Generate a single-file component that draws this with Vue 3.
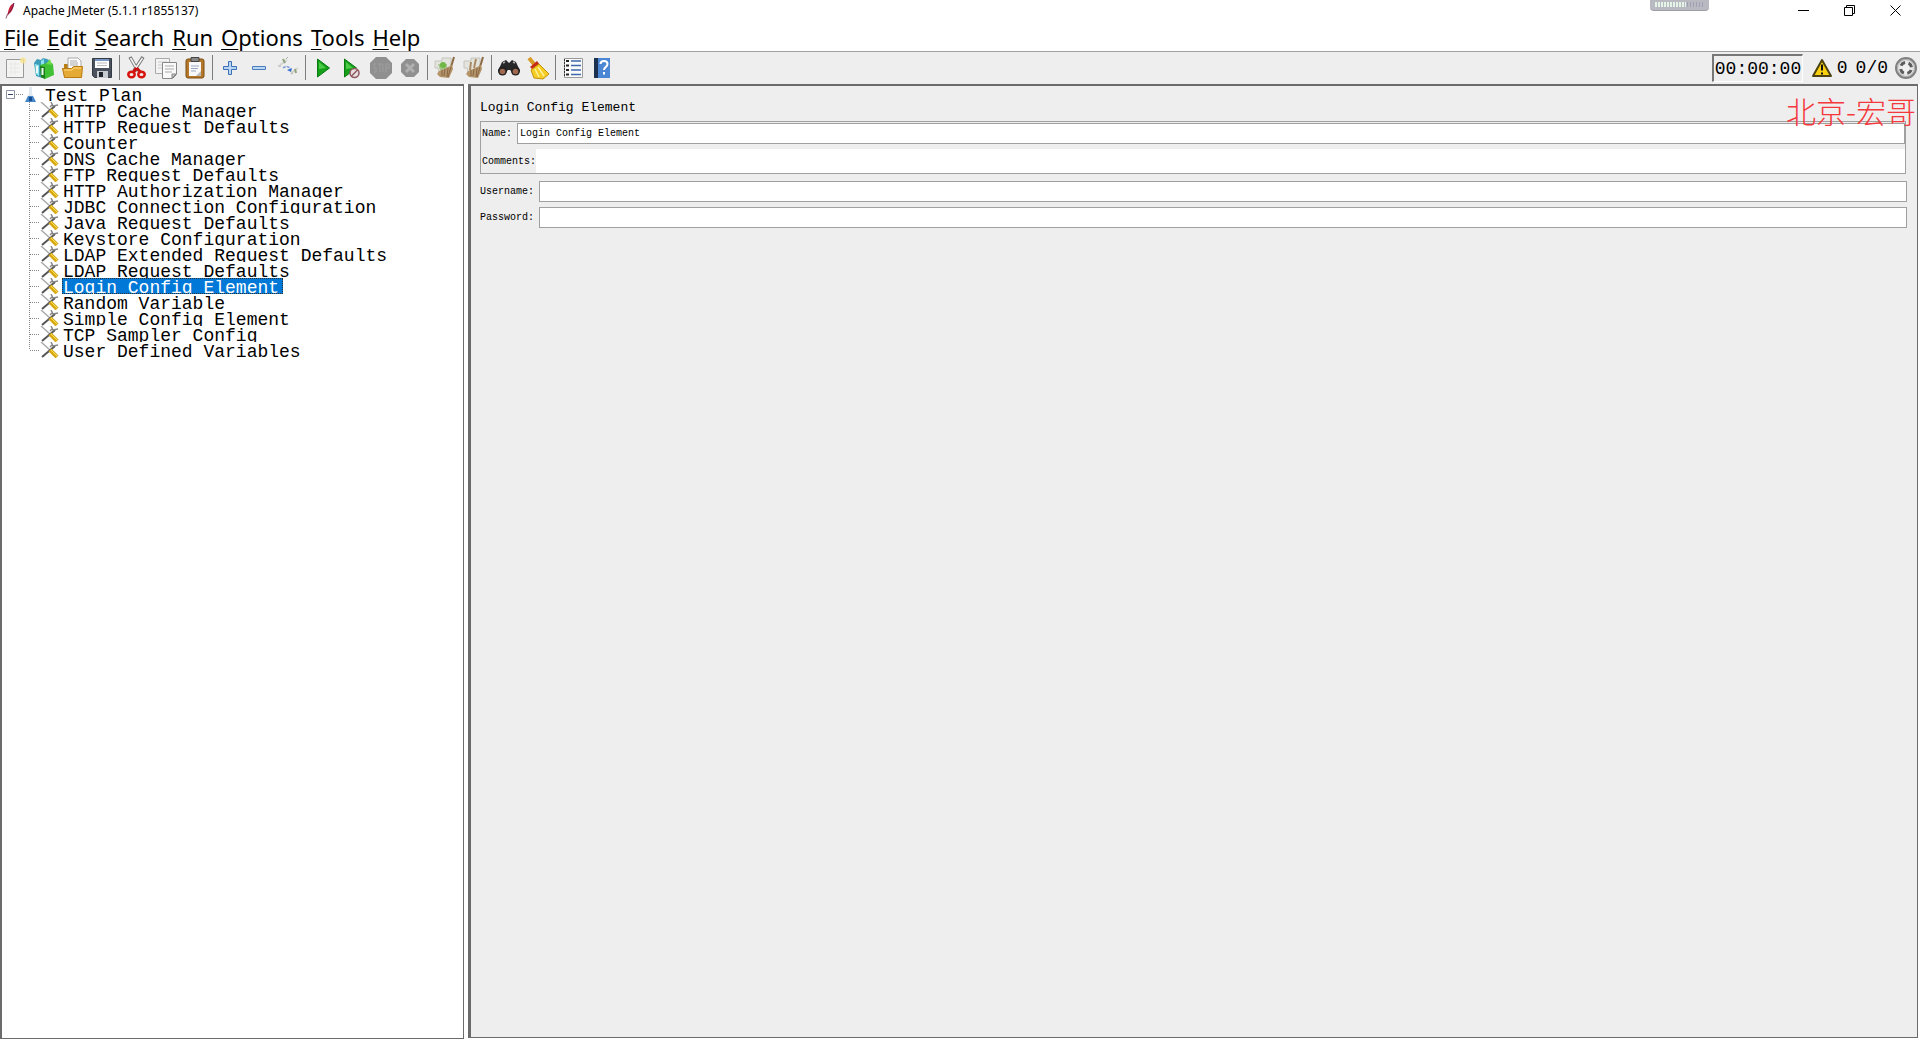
<script setup>
import { ref } from 'vue'

const menus = ['File', 'Edit', 'Search', 'Run', 'Options', 'Tools', 'Help']

const toolGroups = [
  ['New', 'Templates', 'Open', 'Save'],
  ['Cut', 'Copy', 'Paste'],
  ['Expand', 'Collapse', 'Toggle'],
  ['Start', 'Start no pauses', 'Stop', 'Shutdown'],
  ['Clear', 'Clear all'],
  ['Find', 'Reset search'],
  ['Function helper', 'Help contents'],
]

const elements = [
  'HTTP Cache Manager',
  'HTTP Request Defaults',
  'Counter',
  'DNS Cache Manager',
  'FTP Request Defaults',
  'HTTP Authorization Manager',
  'JDBC Connection Configuration',
  'Java Request Defaults',
  'Keystore Configuration',
  'LDAP Extended Request Defaults',
  'LDAP Request Defaults',
  'Login Config Element',
  'Random Variable',
  'Simple Config Element',
  'TCP Sampler Config',
  'User Defined Variables',
]

const selected = ref('Login Config Element')
const name = ref('Login Config Element')
const comments = ref('')
const username = ref('')
const password = ref('')
</script>

<template>
  <div class="window">
    <header class="titlebar">
      <svg class="feather" width="10" height="16" viewBox="0 0 10 16" aria-hidden="true">
        <path d="M9 0C6 1 4 4 3 9l-1 4 2-2c3-2 5-7 5-11z" fill="#c8203a" />
        <path d="M9 0C8 5 5 9 3 11" stroke="#6b2350" fill="none" />
        <path d="M2.500 11L1 15.500" stroke="#8d5a78" fill="none" />
      </svg>
      <span class="title">Apache JMeter (5.1.1 r1855137)</span>
      <div class="grip">
        <svg width="50" height="5" viewBox="0 0 50 5" aria-hidden="true">
          <path d="M0 2.500H31" stroke="#e4f4e6" stroke-width="5" stroke-dasharray="2 1" />
          <path d="M32 2.500H50" stroke="#a0a0b4" stroke-width="5" stroke-dasharray="1 2" />
        </svg>
      </div>
      <div class="controls">
        <button type="button" aria-label="Minimize">
          <svg width="11" height="11" viewBox="0 0 11 11"><path d="M0 5.500h11" stroke="#000" /></svg>
        </button>
        <button type="button" aria-label="Restore">
          <svg width="11" height="11" viewBox="0 0 11 11" fill="none" stroke="#000">
            <path d="M.5 2.500h8v8h-8zM2.500 2.500v-2h8v8h-2" />
          </svg>
        </button>
        <button type="button" aria-label="Close">
          <svg width="11" height="11" viewBox="0 0 11 11" fill="none" stroke="#000">
            <path d="M.5.5l10 10M10.500.5l-10 10" />
          </svg>
        </button>
      </div>
    </header>

    <nav class="menubar">
      <button v-for="m in menus" :key="m" type="button"><u>{{ m[0] }}</u>{{ m.slice(1) }}</button>
    </nav>

    <div class="toolbar">
      <div v-for="(group, g) in toolGroups" :key="g" class="group">
        <button v-for="t in group" :key="t" type="button" :aria-label="t">
          <svg width="24" height="24" viewBox="0 0 24 24" fill="none" aria-hidden="true">
            <g v-if="t === 'New'">
              <path d="M3.500 3.500h17v18h-17z" fill="#f4f4f2" stroke="#999" />
              <path d="M6 8h11M6 12h11M6 16h11M8 6v13M12 6v13" stroke="#e8e8e8" />
              <circle cx="20" cy="4.500" r="3" fill="#f7e58c" opacity=".8" />
            </g>
            <g v-else-if="t === 'Templates'">
              <path d="M2 7l3-4 4 1 2-2 4 1 2 1 1 14-8 4-6-2z" fill="#3d9db8" />
              <path d="M3 8l4 1v11l-3-2zM9 5l3-2v6l-3 1z" fill="#8ee4ee" />
              <path d="M8 9l10-3 3 2 1 11-9 4-4-2z" fill="#3fc035" />
              <path d="M8 10l5 1v12l-4-2z" fill="#1d7d1a" />
              <path d="M14 8l4-5 2 6z" fill="#6cdc4a" />
              <path d="M5 10v7M10.500 12v7" stroke="#eefaf4" stroke-width="2" />
            </g>
            <g v-else-if="t === 'Open'">
              <path d="M3 8h7l2 3h9v10H3z" fill="#b97f15" />
              <path d="M7 2h10l3 3v10H7z" fill="#fbfbfb" stroke="#aaa" />
              <path d="M9 5h7M9 7h8M9 9h8" stroke="#aaa" />
              <path d="M1.500 12.500h9l2-2h9l-1 11h-17z" fill="#e5aa35" stroke="#b97b12" />
              <path d="M3 14h8l2-2h7" stroke="#ffdd80" />
            </g>
            <g v-else-if="t === 'Save'">
              <path d="M2.500 2.500h19v19h-17l-2-2z" fill="#4b525e" stroke="#343a44" />
              <path d="M5 3h14v9H5z" fill="#fff" />
              <path d="M5 3h14v2H5z" fill="#7895c4" />
              <path d="M7 7h10M7 9.500h10" stroke="#bbb" />
              <path d="M7 15h11v7H7z" fill="#c8cbd0" />
              <path d="M9 16h4v5H9z" fill="#20242c" />
            </g>
            <g v-else-if="t === 'Cut'">
              <path d="M5 1l8 14M18 1l-9 14" stroke="#777" stroke-width="3.500" />
              <path d="M5.500 2l7 12M17.500 2l-8 12" stroke="#f4f4f4" stroke-width="1.500" />
              <path d="M11.500 12l-3 4M11.500 12l4 4" stroke="#c8120f" stroke-width="3" />
              <ellipse cx="6.500" cy="18.500" rx="3.200" ry="2.800" stroke="#d8140f" stroke-width="2.500" />
              <ellipse cx="16.500" cy="18.500" rx="3.200" ry="2.800" stroke="#d8140f" stroke-width="2.500" />
            </g>
            <g v-else-if="t === 'Copy'">
              <path d="M1.500 2.500h14v15h-14z" fill="#f3f3f3" stroke="#aaa" />
              <path d="M4 6h9M4 9h5M4 12h5" stroke="#ccc" />
              <path d="M8.500 6.500h14v12l-4 4h-10z" fill="#fafafa" stroke="#888" />
              <path d="M11 10h9M11 13h9M11 16h7" stroke="#aaa" />
              <path d="M22 18h-4v4z" fill="#ccc" stroke="#888" />
            </g>
            <g v-else-if="t === 'Paste'">
              <rect x="3" y="3" width="18" height="19" rx="2" fill="#b5782a" stroke="#7c4e12" />
              <path d="M6 6h12v14H6z" fill="#f8f8fa" />
              <path d="M8 1.500h8v4H8z" fill="#888" stroke="#444" />
              <path d="M8 10h8M8 12.500h7M8 15h5" stroke="#9ba8c0" />
              <path d="M18 15l-5 5h5z" fill="#bbb" />
            </g>
            <g v-else-if="t === 'Expand'">
              <path d="M10.500 5.500h3v5h5v3h-5v5h-3v-5h-5v-3h5z" fill="#b9d7f3" stroke="#3b6fb6" />
            </g>
            <g v-else-if="t === 'Collapse'">
              <path d="M5.500 10.500h13v3h-13z" fill="#b9d7f3" stroke="#4b7dbd" />
            </g>
            <g v-else-if="t === 'Toggle'">
              <path d="M4 9l7-5M15 17l7-5" stroke="#d4d4d0" stroke-width="2" />
              <path d="M7 3l2 4M19 13l1 4" stroke="#8fa57c" stroke-width="2" />
              <path d="M2 10h3M10 3l2-2M15 18l2-1" stroke="#aaa" />
              <path d="M7 12c2-2 6-2 7 1" stroke="#7c9dd8" stroke-width="1.500" stroke-dasharray="3 1" />
              <path d="M11 14l5-2-1 4z" fill="#356fcc" />
            </g>
            <g v-else-if="t === 'Start'">
              <path d="M6.500 3l12 9-12 9z" fill="#14a019" stroke="#0b7a13" />
              <path d="M8 6l7 6-7 1z" fill="#4ccb48" />
            </g>
            <g v-else-if="t === 'Start no pauses'">
              <path d="M4.500 3l12 9-12 9z" fill="#14a019" stroke="#0b7a13" />
              <path d="M6 6l7 6-7 1z" fill="#4ccb48" />
              <circle cx="14.500" cy="17" r="4.500" fill="#e6e0de" stroke="#8f5560" stroke-width="1.500" />
              <path d="M11.500 20l6-6" stroke="#8f5560" stroke-width="1.500" />
            </g>
            <g v-else-if="t === 'Stop'">
              <path d="M7 1h10l6 6v10l-6 6H7l-6-6V7z" fill="#909090" />
              <path d="M7 8H5v4h2v4H5M9 8h4M11 8v8M14 8v8M17 8v8M17 8h3v4h-3" stroke="#9e9e9e" />
            </g>
            <g v-else-if="t === 'Shutdown'">
              <path d="M8 3h8l5 5v8l-5 5H8l-5-5V8z" fill="#909090" />
              <path d="M8 8l8 8M16 8l-8 8" stroke="#b0b0b0" stroke-width="3" />
            </g>
            <g v-else-if="t === 'Clear' || t === 'Clear all'">
              <path d="M2 5h7V2h9v10l-3 8H7l-2-8H2z" fill="#e4e4de" stroke="#c4c4bc" />
              <path v-if="t === 'Clear'" d="M5 8h9v6H7z" fill="#a5c48c" />
              <circle v-if="t === 'Clear'" cx="10" cy="9" r="3" fill="#6fb845" />
              <path d="M21 1l-3 10" stroke="#8d6a45" stroke-width="2" />
              <path d="M6 15l5-2 8-4 1 4-4 9-9-1-3-3z" fill="#b59468" />
              <path d="M9 14v6M12 13l-1 7M15 12l-1 9M18 11l-3 10" stroke="#86664a" />
              <path v-if="t === 'Clear all'" d="M14 3l-2 9M9 6l-1 8" stroke="#a98a62" stroke-width="2" />
            </g>
            <g v-else-if="t === 'Find'">
              <path d="M5 6l4-2 3 3 3-3 4 2 4 9-5 4-5-5h-2l-5 5-5-4z" fill="#26282a" />
              <path d="M6 7l2-1M16 6l2 1" stroke="#aaa" stroke-width="1.500" />
              <circle cx="5.500" cy="15" r="4.500" fill="#222" />
              <circle cx="18.500" cy="15" r="4.500" fill="#222" />
              <circle cx="5.500" cy="15.500" r="2.800" fill="#a06a50" />
              <circle cx="18.500" cy="15.500" r="2.800" fill="#a06a50" />
            </g>
            <g v-else-if="t === 'Reset search'">
              <path d="M3 2l5 6" stroke="#d99b28" stroke-width="4" />
              <path d="M4 11l7-6 3 4-7 5z" fill="#c62a16" />
              <path d="M5 14l8-6 10 10-6 5-9-1z" fill="#f5cd25" stroke="#c4930e" />
              <path d="M9 13l4 8M12 11l6 9" stroke="#fff09a" stroke-width="1.500" />
            </g>
            <g v-else-if="t === 'Function helper'">
              <path d="M3.500 2.500h18v19h-18z" fill="#fafafa" stroke="#999" />
              <path d="M3.500 3v18" stroke="#333" stroke-dasharray="2 1" />
              <path d="M5 5h3M5 9.500h3M5 14h3M5 18.500h3" stroke="#222" stroke-width="2" />
              <path d="M10 5h10M10 9.500h10M10 14h10M10 18.500h10" stroke="#3e68ad" stroke-width="1.500" />
            </g>
            <g v-else>
              <path d="M4 2h16v20H4z" fill="#4a86d4" />
              <path d="M4 2h4v20H4z" fill="#1c3050" />
              <path d="M10.500 8c0-4 7-4 7 0 0 3-3.500 3-3.500 6M14 16v2.500" stroke="#fff" stroke-width="2" />
            </g>
          </svg>
        </button>
      </div>

      <div class="status">
        <output class="timer">00:00:00</output>
        <svg class="warn" width="22" height="20" viewBox="0 0 22 20" aria-hidden="true">
          <path d="M11 2L20 18H2z" fill="#fbd010" stroke="#4c4310" stroke-width="2" stroke-linejoin="round" />
          <path d="M11 6.500v6M11 14.500v2" stroke="#111" stroke-width="2" />
        </svg>
        <span>0</span>
        <span class="threads">0/0</span>
        <svg class="engine" width="22" height="22" viewBox="0 0 22 22" aria-hidden="true">
          <circle cx="11" cy="11" r="10" fill="#e4e4e4" stroke="#808080" stroke-width="2" />
          <circle cx="11" cy="11" r="8.500" fill="none" stroke="#aaa" />
          <circle cx="11" cy="11" r="5.500" fill="#f0f0f0" stroke="#5c5c5c" stroke-width="3" stroke-dasharray="5 3.640" stroke-dashoffset="-2" />
        </svg>
      </div>
    </div>

    <main class="split">
      <aside class="tree">
        <div class="row root">
          <svg width="42" height="16" viewBox="0 0 42 16" fill="none" aria-hidden="true">
            <path d="M4.500 4.500h8v8h-8z" fill="#fff" stroke="#8b93a3" />
            <path d="M6 8.500h5" stroke="#34465f" />
            <path d="M14 8.500h8" stroke="#888" stroke-dasharray="1 1" />
            <path d="M27 1h3v6l3 8.500H24L27 7z" fill="#e1e9f0" />
            <path d="M26 10h5l3 6H23z" fill="#4385c7" />
            <path d="M27 11h3v4h-3z" fill="#164e91" />
          </svg>
          <span class="label">Test Plan</span>
        </div>
        <ul>
          <li v-for="(e, i) in elements" :key="e" class="row" @click="selected = e">
            <svg width="33" height="16" viewBox="0 0 33 16" fill="none" aria-hidden="true">
              <path :d="i === elements.length - 1 ? 'M.5 0v8' : 'M.5 0v16'" stroke="#888" stroke-dasharray="1 1" />
              <path d="M1 8.500h10" stroke="#888" stroke-dasharray="1 1" />
              <path d="M12 0l9 8" stroke="#aaa" stroke-width="1.500" />
              <path d="M13 15L26 4" stroke="#555" stroke-width="2" />
              <path d="M22 0l2 4 5-1M23 3l-2 2" stroke="#888" stroke-width="1.500" />
              <path d="M21 8l7 7" stroke="#d9a916" stroke-width="4" />
              <path d="M22 8l6 6" stroke="#f8df5c" />
            </svg>
            <span class="label" :class="{ selected: e === selected }">{{ e }}</span>
          </li>
        </ul>
      </aside>

      <section class="editor">
        <h1>Login Config Element</h1>
        <div class="box">
          <div class="field name">
            <label for="name">Name:</label>
            <input id="name" v-model="name" type="text" />
          </div>
          <div class="field comments">
            <label for="comments">Comments:</label>
            <input id="comments" v-model="comments" type="text" />
          </div>
        </div>
        <div class="field cred">
          <label for="username">Username:</label>
          <input id="username" v-model="username" type="text" />
        </div>
        <div class="field cred">
          <label for="password">Password:</label>
          <input id="password" v-model="password" type="password" />
        </div>
        <span class="watermark">北京-宏哥</span>
      </section>
    </main>
  </div>
</template>

<style>
body {
  margin: 0;
  background: #fff;
}
</style>

<style scoped>
.window {
  display: flex;
  flex-direction: column;
  min-height: 100vh;
  box-sizing: border-box;
  padding-bottom: 1px;
  color: #000;
  font-family: "Liberation Mono", "Noto Sans CJK SC", monospace;
}
button {
  padding: 0;
  border: 0;
  background: none;
  color: inherit;
  font: inherit;
}
svg {
  display: block;
  flex: none;
}

.titlebar {
  display: flex;
  height: 22px;
  align-items: center;
  font: 12px/22px "Noto Sans", sans-serif;
}
.feather {
  margin: 0 8px 0 5px;
}
.grip {
  display: flex;
  align-self: flex-start;
  justify-content: center;
  width: 59px;
  height: 11px;
  box-sizing: border-box;
  padding-top: 2px;
  margin-left: auto;
  border-radius: 0 0 4px 4px;
  background: #b9bac1;
  border-bottom: 1px solid #9d9da5;
}
.controls {
  display: flex;
  align-self: flex-start;
  margin: 0 2px 0 71px;
}
.controls button {
  display: flex;
  align-items: center;
  justify-content: center;
  width: 46px;
  height: 21px;
}

.menubar {
  display: flex;
  gap: 8px;
  height: 29px;
  padding-left: 4px;
  border-bottom: 1px solid #a0a0a0;
  font: 22px/30px "Noto Sans", sans-serif;
}
.menubar u {
  text-decoration-thickness: 1px;
  text-underline-offset: 3px;
}

.toolbar {
  display: flex;
  align-items: center;
  height: 32px;
  background: #eee;
}
.group {
  display: flex;
}
.group + .group::before {
  content: "";
  width: 1px;
  height: 25px;
  margin: 0 2px 0 3px;
  background: #7d7d7d;
}
.group button {
  display: flex;
  align-items: center;
  justify-content: center;
  width: 29px;
  height: 26px;
}
.status {
  display: flex;
  align-items: center;
  margin-left: auto;
  font-size: 18px;
}
.timer {
  box-sizing: border-box;
  width: 91px;
  height: 28px;
  padding-left: 1px;
  border: solid;
  border-width: 2px 1px 1px 2px;
  border-color: #777 #fff #fff #777;
  line-height: 26px;
}
.warn {
  margin: 0 4px 0 8px;
}
.threads {
  margin: 0 7px 0 8px;
}
.engine {
  margin-right: 3px;
}

.split {
  display: flex;
  flex: 1;
}
.tree {
  flex: none;
  width: 464px;
  box-sizing: border-box;
  border: solid #6b6b6b;
  border-width: 2px 1px 1px 2px;
  font-size: 18px;
}
.tree ul {
  margin: 0;
  padding: 0 0 0 27px;
  list-style: none;
}
.row {
  display: flex;
  height: 16px;
}
.label {
  height: 16px;
  padding: 0 4px 0 1px;
  overflow: hidden;
  line-height: 20px;
  white-space: nowrap;
}
.label.selected {
  background: #0078d7;
  color: #fff;
  outline: 1px dotted #333;
  outline-offset: -1px;
}

.editor {
  position: relative;
  flex: 1;
  min-width: 0;
  box-sizing: border-box;
  margin: 0 2px 1px 4px;
  padding: 13px 10px 12px 9px;
  border: solid #6b6b6b;
  border-width: 2px 1px 1px 3px;
  background: #eee;
  font-size: 10px;
}
h1 {
  margin: 0 0 4px;
  font-size: 13px;
  font-weight: 400;
  line-height: 18px;
}
.box {
  border: 1px solid #a0a0a0;
  margin: 0 1px 7px 0;
}
.field {
  display: flex;
  align-items: center;
}
.field input {
  flex: 1;
  min-width: 0;
  height: 21px;
  box-sizing: border-box;
  padding: 0 2px;
  border: 1px solid #a0a0a0;
  border-radius: 0;
  background: #fff;
  color: #000;
  font: inherit;
  outline: 0;
}
.field label {
  flex: none;
  padding-left: 1px;
}
.name {
  padding-top: 1px;
}
.name label {
  width: 35px;
}
.comments {
  padding-top: 5px;
}
.comments label {
  width: 54px;
}
.field.comments input {
  height: 24px;
  border: 0;
}
.cred + .cred {
  margin-top: 5px;
}
.cred label {
  width: 59px;
  padding: 0;
}
.watermark {
  position: absolute;
  top: 3px;
  right: 1px;
  color: #f5383c;
  font: 300 30px/42px "Noto Sans CJK SC", sans-serif;
}
</style>
